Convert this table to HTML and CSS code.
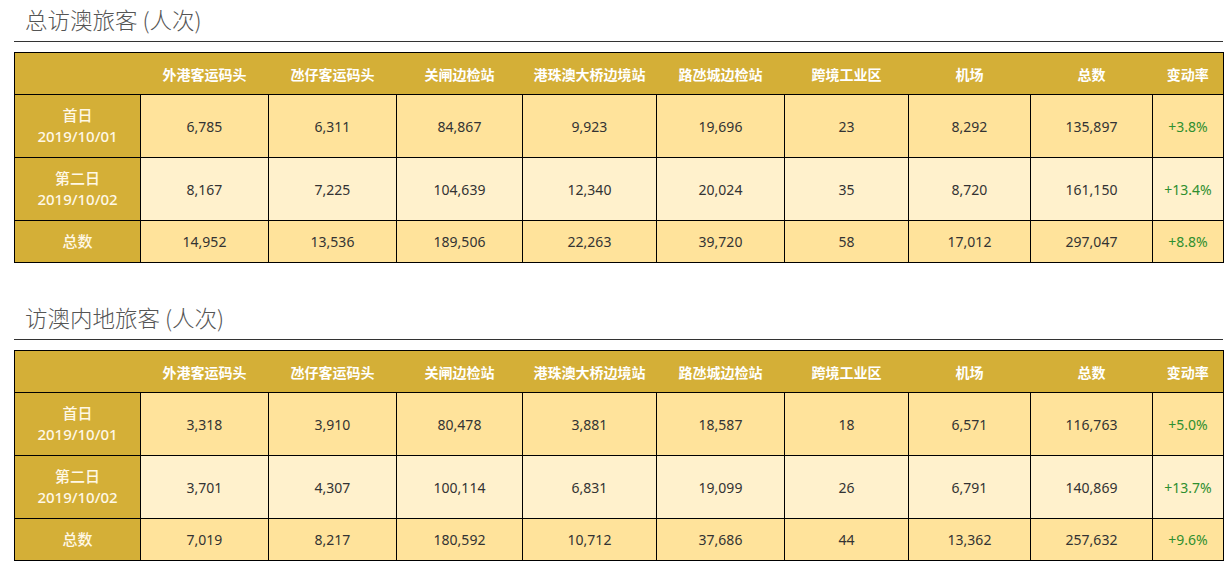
FILE: index.html
```html
<!DOCTYPE html>
<html lang="zh">
<head>
<meta charset="utf-8">
<title>访澳旅客</title>
<link rel="stylesheet" href="styles.css">
</head>
<body>
<div class="page">
  <section class="block">
    <h2 class="title">总访澳旅客 (人次)</h2>
    <table class="stats">
      <colgroup>
        <col class="c0"><col class="c1"><col class="c2"><col class="c3"><col class="c4"><col class="c5"><col class="c6"><col class="c7"><col class="c8"><col class="c9">
      </colgroup>
      <thead>
        <tr class="rh"><th></th><th>外港客运码头</th><th>氹仔客运码头</th><th>关闸边检站</th><th>港珠澳大桥边境站</th><th>路氹城边检站</th><th>跨境工业区</th><th>机场</th><th>总数</th><th>变动率</th></tr>
      </thead>
      <tbody>
        <tr class="r1"><th>首日<br>2019/10/01</th><td>6,785</td><td>6,311</td><td>84,867</td><td>9,923</td><td>19,696</td><td>23</td><td>8,292</td><td>135,897</td><td class="pct">+3.8%</td></tr>
        <tr class="r2"><th>第二日<br>2019/10/02</th><td>8,167</td><td>7,225</td><td>104,639</td><td>12,340</td><td>20,024</td><td>35</td><td>8,720</td><td>161,150</td><td class="pct">+13.4%</td></tr>
        <tr class="r3"><th>总数</th><td>14,952</td><td>13,536</td><td>189,506</td><td>22,263</td><td>39,720</td><td>58</td><td>17,012</td><td>297,047</td><td class="pct">+8.8%</td></tr>
      </tbody>
    </table>
  </section>
  <section class="block second">
    <h2 class="title">访澳内地旅客 (人次)</h2>
    <table class="stats">
      <colgroup>
        <col class="c0"><col class="c1"><col class="c2"><col class="c3"><col class="c4"><col class="c5"><col class="c6"><col class="c7"><col class="c8"><col class="c9">
      </colgroup>
      <thead>
        <tr class="rh"><th></th><th>外港客运码头</th><th>氹仔客运码头</th><th>关闸边检站</th><th>港珠澳大桥边境站</th><th>路氹城边检站</th><th>跨境工业区</th><th>机场</th><th>总数</th><th>变动率</th></tr>
      </thead>
      <tbody>
        <tr class="r1"><th>首日<br>2019/10/01</th><td>3,318</td><td>3,910</td><td>80,478</td><td>3,881</td><td>18,587</td><td>18</td><td>6,571</td><td>116,763</td><td class="pct">+5.0%</td></tr>
        <tr class="r2"><th>第二日<br>2019/10/02</th><td>3,701</td><td>4,307</td><td>100,114</td><td>6,831</td><td>19,099</td><td>26</td><td>6,791</td><td>140,869</td><td class="pct">+13.7%</td></tr>
        <tr class="r3"><th>总数</th><td>7,019</td><td>8,217</td><td>180,592</td><td>10,712</td><td>37,686</td><td>44</td><td>13,362</td><td>257,632</td><td class="pct">+9.6%</td></tr>
      </tbody>
    </table>
  </section>
</div>
</body>
</html>
```
FILE: styles.css
```css
html, body {
  margin: 0;
  padding: 0;
  background: #fff;
}
body {
  font-family: "Noto Sans", "Noto Sans CJK SC", sans-serif;
  color: #333;
}
.page {
  padding-left: 14px;
  width: 1209px;
}
.block.second {
  margin-top: 35px;
}
.title {
  margin: 0;
  height: 41px;
  box-sizing: content-box;
  border-bottom: 1px solid #333;
  padding-left: 11px;
  font-family: "Noto Sans CJK SC", "Noto Sans", sans-serif;
  font-weight: 300;
  font-size: 22.5px;
  line-height: 38px;
  color: #555;
}
.stats {
  margin-top: 10px;
  width: 1209px;
  table-layout: fixed;
  border-collapse: collapse;
  border: 1px solid #000;
  font-size: 14px;
}
.c0 { width: 126px; }
.c1 { width: 128px; }
.c2 { width: 128px; }
.c3 { width: 126px; }
.c4 { width: 134px; }
.c5 { width: 128px; }
.c6 { width: 124px; }
.c7 { width: 122px; }
.c8 { width: 122px; }
.c9 { width: 71px; }
.rh { height: 42px; }
.r1, .r2 { height: 63px; }
.r3 { height: 42px; }
.stats thead th {
  background: #d4af37;
  color: #fff;
  font-weight: 700;
  font-size: 14px;
  padding: 0;
  border-bottom: 1px solid #000;
  font-family: "Noto Sans CJK SC", sans-serif;
}
.stats tbody th {
  background: #d4af37;
  color: #fff8e6;
  font-weight: 500;
  font-size: 15px;
  line-height: 21px;
  border: 1px solid #000;
  padding: 0;
  font-family: "Noto Sans", "Noto Sans CJK SC", sans-serif;
}
.stats td {
  border: 1px solid #000;
  text-align: center;
  padding: 0;
  color: #333;
}
.r1 td, .r3 td { background: #ffe39b; }
.r2 td { background: #fff1cc; }
.stats td.pct { color: #2f8f2f; }
```
